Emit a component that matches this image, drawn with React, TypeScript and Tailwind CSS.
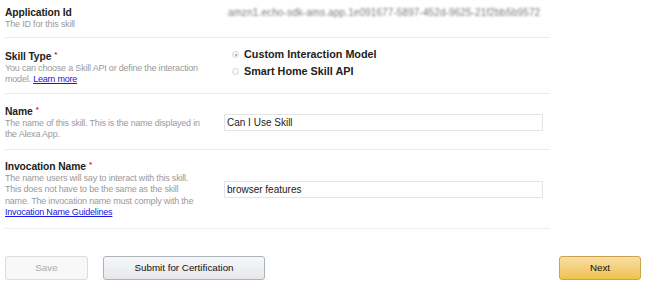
import React from "react";

const F = { fontFamily: '"Liberation Sans", Arial, sans-serif' };

function Label({ children, req }: { children: React.ReactNode; req?: boolean }) {
  return (
    <div className="text-[10.3px] leading-[12px] font-bold text-[#222] whitespace-nowrap tracking-[-0.1px]">
      {children}
      {req && <span className="text-[#e02020] text-[8px] align-top ml-[3px] relative top-[-2px]">*</span>}
    </div>
  );
}

function Desc({ children }: { children: React.ReactNode }) {
  return (
    <div className="text-[9px] leading-[11.3px] text-[#9a9a9a] whitespace-nowrap tracking-[-0.2px]">{children}</div>
  );
}

function Radio({ checked }: { checked?: boolean }) {
  return (
    <span className="inline-flex items-center justify-center w-[7px] h-[7px] rounded-full border border-[#d4d4d4] bg-[#fafafa] mr-[5px]">
      {checked && <span className="w-[2px] h-[2px] rounded-full bg-[#999]" />}
    </span>
  );
}

function Input({ value }: { value: string }) {
  return (
    <div className="h-[17px] w-[319px] border border-[#e4e4e4] text-[10px] leading-[15px] text-[#222] pl-[2px] bg-white">
      {value}
    </div>
  );
}

export default function App() {
  return (
    <div style={F} className="w-[650px] h-[286px] bg-white overflow-hidden">
      <div className="ml-[5px] w-[545px]">
        {/* Application Id */}
        <div className="flex h-[38px] border-b border-[#ececec] pt-[7px]">
          <div className="w-[219px]">
            <Label>Application Id</Label>
            <Desc>The ID for this skill</Desc>
          </div>
          <div className="pl-[4px] text-[10px] leading-[12px] text-[#7a7a7a] blur-[1.1px] whitespace-nowrap tracking-[0.1px]">
            amzn1.echo-sdk-ams.app.1e091677-5897-452d-9625-21f2bb5b9572
          </div>
        </div>
        {/* Skill Type */}
        <div className="flex h-[56px] border-b border-[#ececec]">
          <div className="w-[219px] pt-[13px]">
            <Label req>Skill Type</Label>
            <Desc>
              You can choose a Skill API or define the interaction
              <br />
              model. <a className="underline text-[#1515e6]">Learn more</a>
            </Desc>
          </div>
          <div className="pl-[8px] pt-[8px]">
            <div className="flex items-center h-[17px] text-[10.8px] font-bold text-[#222]">
              <Radio checked />
              Custom Interaction Model
            </div>
            <div className="flex items-center h-[17px] text-[10.8px] font-bold text-[#222]">
              <Radio />
              Smart Home Skill API
            </div>
          </div>
        </div>
        {/* Name */}
        <div className="flex h-[56px] border-b border-[#ececec]">
          <div className="w-[219px] pt-[12px]">
            <Label req>Name</Label>
            <Desc>
              The name of this skill. This is the name displayed in
              <br />
              the Alexa App.
            </Desc>
          </div>
          <div className="pt-[20px]">
            <Input value="Can I Use Skill" />
          </div>
        </div>
        {/* Invocation Name */}
        <div className="flex h-[79px] border-b border-[#ececec]">
          <div className="w-[219px] pt-[11px]">
            <Label req>Invocation Name</Label>
            <Desc>
              The name users will say to interact with this skill.
              <br />
              This does not have to be the same as the skill
              <br />
              name. The invocation name must comply with the
              <br />
              <a className="underline text-[#1515e6]">Invocation Name Guidelines</a>
            </Desc>
          </div>
          <div className="pt-[31px]">
            <Input value="browser features" />
          </div>
        </div>
      </div>
      {/* Buttons */}
      <div className="flex items-center mt-[27px] pl-[5px] pr-[9px]">
        <button className="w-[83px] h-[24px] rounded-[3px] border border-[#dcdcdc] bg-[#f8f8f8] text-[9.8px] text-[#aaa]">
          Save
        </button>
        <button className="ml-[15px] w-[162px] h-[24px] rounded-[3px] border border-[#adb1b8] bg-gradient-to-b from-[#f7f8fa] to-[#e5e7ea] text-[9.8px] text-[#111]">
          Submit for Certification
        </button>
        <div className="flex-1" />
        <button className="w-[82px] h-[24px] rounded-[3px] border border-[#c9a24a] bg-gradient-to-b from-[#f7dfa5] to-[#f0c14b] text-[9.8px] text-[#111]">
          Next
        </button>
      </div>
    </div>
  );
}
